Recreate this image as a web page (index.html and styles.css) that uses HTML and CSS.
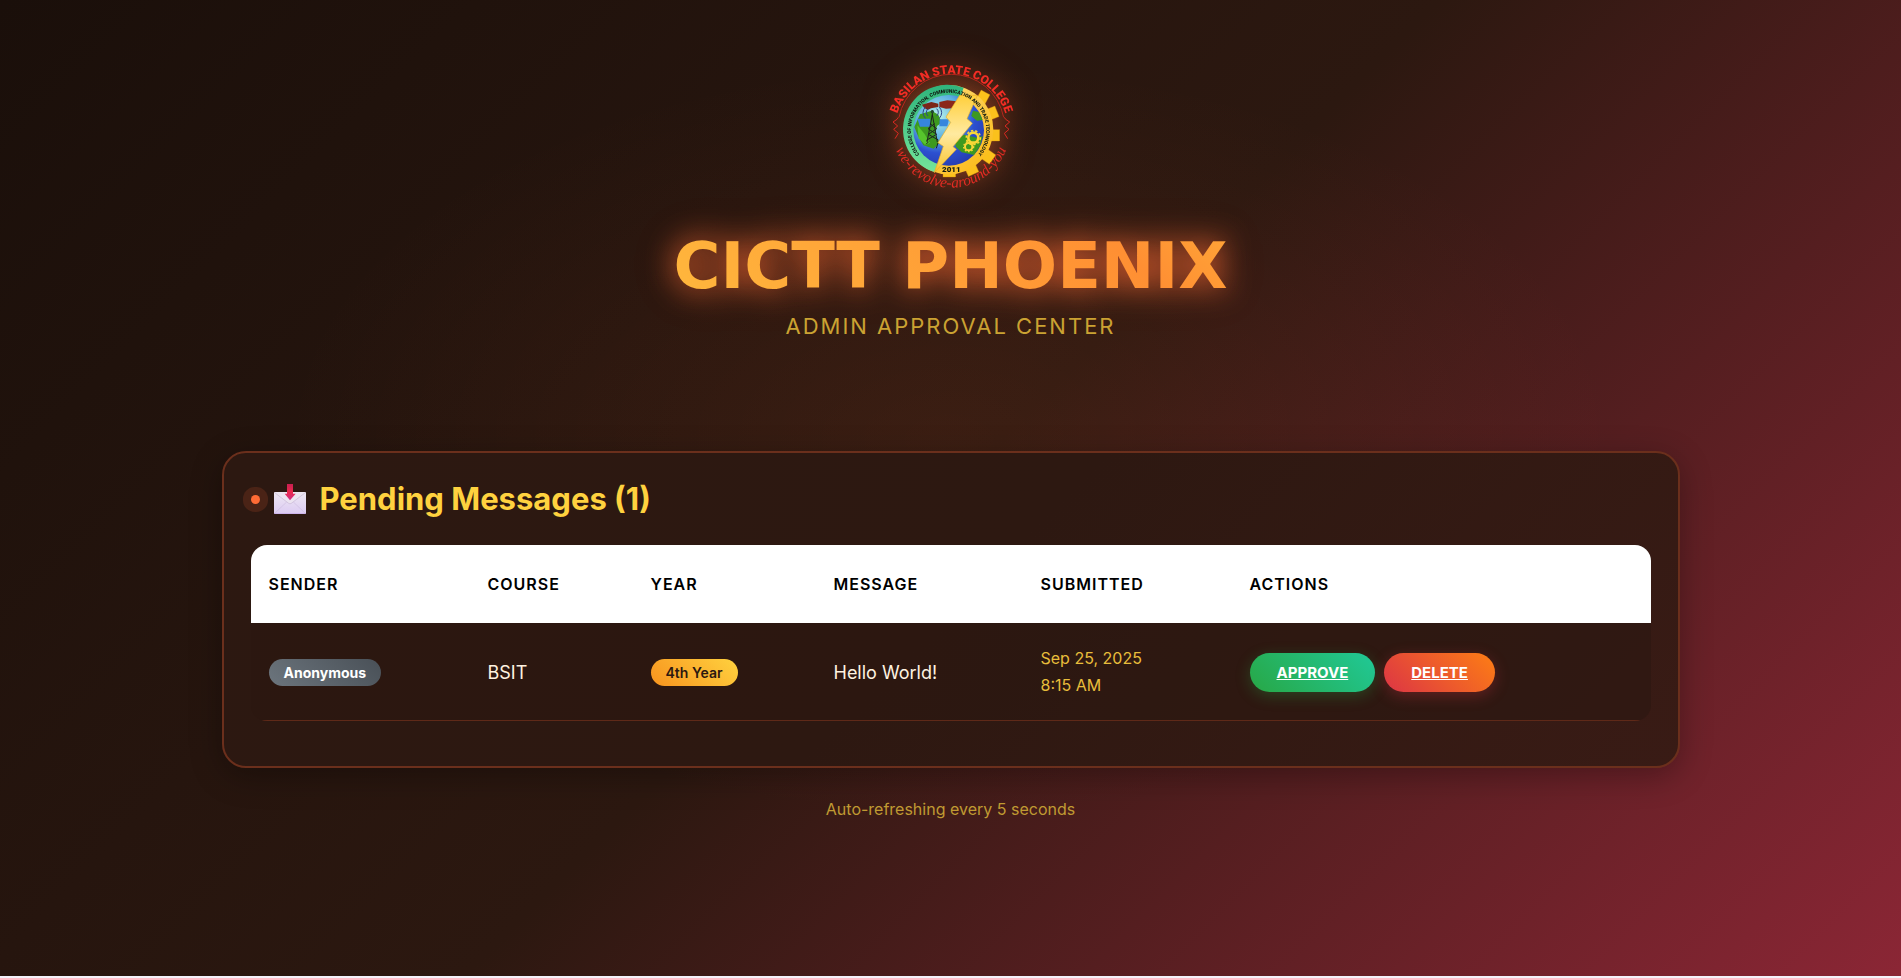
FILE: index.html
```html
<!DOCTYPE html>
<html lang="en">
<head>
<meta charset="utf-8">
<title>CICTT Phoenix - Admin Approval Center</title>
<link rel="stylesheet" href="styles.css">
</head>
<body>
<div class="page">
  <header class="header">
    <svg class="logo" viewBox="60 50 360 390" role="img" aria-label="College seal">
      <defs>
        <linearGradient id="ringGreen" x1="0" y1="0" x2="0" y2="1"><stop offset="0" stop-color="#2fb47c"/><stop offset="1" stop-color="#74e59a"/></linearGradient>
        <linearGradient id="ringGold" x1="0" y1="0" x2="1" y2="1"><stop offset="0" stop-color="#ffe08a"/><stop offset="1" stop-color="#fbb80f"/></linearGradient>
        <radialGradient id="globe" cx=".35" cy=".3" r=".8"><stop offset="0" stop-color="#b8f1ea"/><stop offset=".4" stop-color="#5aaee0"/><stop offset=".65" stop-color="#2c50d0"/><stop offset="1" stop-color="#2438a8"/></radialGradient>
        <linearGradient id="bolt" x1="0" y1="0" x2="0" y2="1"><stop offset="0" stop-color="#ffcf3c"/><stop offset=".5" stop-color="#ffeaa0"/><stop offset="1" stop-color="#f9c22b"/></linearGradient>
        <path id="arcTop" d="M72 254A169 169 0 0 1 410 254"/>
        <path id="arcRing" d="M151 333A113 113 0 1 1 315 333"/>
        <path id="arcBottom" d="M63 250A177 177 0 0 0 417 250"/>
      </defs>
      <path d="M82 216l-4 6-12 8 14 12-12 10 14 12-10 16M400 216l4 6 12 8-14 12 12 10-14 12 10 16" fill="none" stroke="#dc2a23" stroke-width="3"/>
      <path d="M84 216A160 160 0 0 1 398 216" fill="none" stroke="#b8261d" stroke-width="3"/>
      <g fill="#fbc11c" stroke="#d58b0a" stroke-width="1">
        <rect x="319" y="138" width="30" height="34" transform="rotate(28 332 159)"/>
        <rect x="345" y="187" width="34" height="34" transform="rotate(-22 363 204)"/>
        <rect x="354" y="253" width="32" height="34"/>
        <rect x="334" y="316" width="34" height="34" transform="rotate(35 351 333)"/>
        <rect x="284" y="354" width="34" height="34" transform="rotate(66 301 371)"/>
        <rect x="216" y="364" width="38" height="31"/>
      </g>
      <circle cx="233" cy="253" r="134" fill="url(#ringGold)"/>
      <path d="M278 127A134 134 0 1 0 190 380Z" fill="url(#ringGreen)"/>
      <circle cx="233" cy="255" r="106" fill="url(#globe)"/>
      <path d="M147 207l35-11 20 12 10 24-14 10-6 27 14 23-18 18-31-10-17-30-10-25zM253 280l27-12 38 9 17-5-8 30-18 27-37-8-18-17zM306 196l18 4 11 24-17 2-17-14z" fill="#3d991f"/>
      <path d="M139 240l20 24 18 28-14 8-20-21z" fill="#57c52c"/>
      <path d="M139 220h38l4 24h-34zM206 222h28l-5 21h-24z" fill="#3685dd"/>
      <path d="M153 178l28-8 21 5v10l-22 4-10 5-11-7z" fill="#7b2518"/>
      <path d="M205 170l24-5 27 3-2 20-29 2-20-5z" fill="#8b281b"/>
      <g fill="none" stroke="#2d458f" stroke-width="3">
        <path d="M171 190q-10 11 0 22M163 185q-14 17 0 34M197 190q10 11 0 22M205 185q14 17 0 34"/>
      </g>
      <path d="M184 195v20m0-7l-16 82m16-82l15 82M177 235l20 15-25 17 30 17M191 235l-20 15 26 17-31 18M165 297l8-8m28 3l-5 17" fill="none" stroke="#1d241e" stroke-width="3"/>
      <circle cx="184" cy="199" r="5" fill="#21472e"/>
      <path d="M266 150l53 0-31 70 16 14-58 70 10 8-66 70 27-79-16-11 38-61-14-16z" fill="url(#bolt)" stroke="#e8ae25" stroke-width="2"/>
      <g fill="none" stroke="#f8d737">
        <circle cx="307" cy="277" r="15" stroke-width="8"/>
        <circle cx="307" cy="277" r="21" stroke-width="5" stroke-dasharray="7 6"/>
        <circle cx="293" cy="304" r="11" stroke-width="6"/>
        <circle cx="293" cy="304" r="15" stroke-width="4" stroke-dasharray="5 5"/>
      </g>
      <text class="seal-top"><textPath href="#arcTop" startOffset="50%" text-anchor="middle">BASILAN STATE COLLEGE</textPath></text>
      <text class="seal-ring"><textPath href="#arcRing" startOffset="50%" text-anchor="middle">COLLEGE OF INFORMATION, COMMUNICATION AND TRADE TECHNOLOGY</textPath></text>
      <text class="seal-year" x="241" y="381" text-anchor="middle">2011</text>
      <text class="seal-motto"><textPath href="#arcBottom" startOffset="50%" text-anchor="middle">we-revolve-around-you</textPath></text>
    </svg>
    <h1 class="title">CICTT PHOENIX</h1>
    <p class="subtitle">ADMIN APPROVAL CENTER</p>
  </header>

  <main class="card">
    <h2 class="card-title">
      <span class="pulse"></span>
      <svg class="inbox" viewBox="0 0 96 90" aria-hidden="true">
        <defs>
          <linearGradient id="paper" x1="0" y1="0" x2="0" y2="1"><stop offset="0" stop-color="#eee7f2"/><stop offset="1" stop-color="#dccbf3"/></linearGradient>
          <linearGradient id="arrow" x1="0" y1="0" x2="0" y2="1"><stop offset="0" stop-color="#c81e50"/><stop offset=".5" stop-color="#ea2a4e"/><stop offset="1" stop-color="#cf2f88"/></linearGradient>
        </defs>
        <rect y="24" width="96" height="66" rx="3" fill="url(#paper)"/>
        <path d="M2 88l36-34M94 88L58 54" stroke="#cdbcdf" stroke-width="2"/>
        <path d="M2 26l42 32q4 3 8 0l42-32" fill="#ece4f1" stroke="#c7b7d4" stroke-width="2"/>
        <path d="M1 89h94" stroke="#c2a1e5" stroke-width="2"/>
        <path d="M39 0h18v29h8L48 49 32 29h7z" fill="url(#arrow)"/>
      </svg>
      <span>Pending Messages (1)</span>
    </h2>
    <table class="messages">
      <thead>
        <tr>
          <th class="col-sender" scope="col">SENDER</th>
          <th class="col-course" scope="col">COURSE</th>
          <th class="col-year" scope="col">YEAR</th>
          <th class="col-message" scope="col">MESSAGE</th>
          <th class="col-submitted" scope="col">SUBMITTED</th>
          <th scope="col">ACTIONS</th>
        </tr>
      </thead>
      <tbody>
        <tr>
          <td><span class="badge badge-sender">Anonymous</span></td>
          <td>BSIT</td>
          <td><span class="badge badge-year">4th Year</span></td>
          <td>Hello World!</td>
          <td class="submitted">Sep 25, 2025<br>8:15 AM</td>
          <td>
            <div class="actions">
              <a class="button approve" href="#approve">APPROVE</a>
              <a class="button delete" href="#delete">DELETE</a>
            </div>
          </td>
        </tr>
      </tbody>
    </table>
  </main>
  <p class="refresh">Auto-refreshing every 5 seconds</p>
</div>
</body>
</html>
```
FILE: styles.css
```css
* {
  box-sizing: border-box;
}

body {
  margin: 0;
  font-family: Inter, "Liberation Sans", sans-serif;
  color: #fff3e0;
}

.page {
  min-height: 100vh;
  padding: 62px 24px 24px;
  border-bottom: 2px solid #f4f2fa;
  background:
    radial-gradient(ellipse at 50% 45%, rgba(255, 107, 53, 0.08), transparent 50%),
    linear-gradient(135deg, #1a0f0a 0%, #2c1810 50%, #8b2635 100%);
  background-origin: border-box;
}

.header {
  display: flex;
  flex-direction: column;
  align-items: center;
  margin-bottom: 105px;
}

.logo {
  width: 120px;
  height: 130px;
  overflow: visible;
  filter: drop-shadow(0 0 15px rgba(255, 107, 53, 0.5));
}

.seal-top {
  font: 900 36px Roboto, sans-serif;
  fill: #f32d25;
}

.seal-ring {
  font: 900 15px Roboto, sans-serif;
  fill: #101a12;
}

.seal-year {
  font: 900 24px Roboto, sans-serif;
  fill: #101a12;
}

.seal-motto {
  font: italic 46px "Liberation Serif", serif;
  fill: #e22c24;
}

.title {
  margin: 34px 0 0;
  font: bold 64px/80px "DejaVu Sans", sans-serif;
  color: transparent;
  background: linear-gradient(45deg, #ffb83d 0%, #ff8f33 80%, #ffa537 100%);
  background-clip: text;
  -webkit-background-clip: text;
  filter: drop-shadow(0 0 15px rgba(255, 107, 53, 0.8)) drop-shadow(0 0 15px rgba(255, 107, 53, 0.25));
}

.subtitle {
  margin: 0;
  font-size: 22px;
  font-weight: 400;
  line-height: 40px;
  letter-spacing: 2px;
  color: #cba333;
}

.card {
  max-width: 1458px;
  margin: 0 auto;
  padding: 21px 27px 45px;
  border: 2px solid #6b2f1c;
  border-radius: 24px;
  background: linear-gradient(135deg, #2c1811 0%, #2d1811 50%, #391b15 100%);
  box-shadow: 0 8px 32px rgba(0, 0, 0, 0.3);
}

.card-title {
  position: relative;
  display: flex;
  align-items: center;
  gap: 14px;
  margin: 0 0 21px;
  padding-left: 23px;
  font-size: 31px;
  font-weight: 700;
  line-height: 50px;
  color: #ffd23f;
}

.pulse {
  position: absolute;
  left: 0;
  width: 9px;
  height: 9px;
  border-radius: 50%;
  background: #ff6b35;
  box-shadow: 0 0 0 8px #4a2316;
}

.inbox {
  width: 32px;
  height: 30px;
}

.messages {
  width: 100%;
  table-layout: fixed;
  border-collapse: separate;
  border-spacing: 0;
  border-radius: 16px;
  overflow: hidden;
  background: rgba(44, 24, 16, 0.6);
}

.col-sender { width: 219px; }
.col-course { width: 163px; }
.col-year { width: 183px; }
.col-message { width: 207px; }
.col-submitted { width: 209px; }

.messages th {
  padding: 26px 18px;
  background: #fff;
  color: #000;
  font-size: 16px;
  font-weight: 600;
  line-height: 26px;
  letter-spacing: 1px;
  text-align: left;
}

.messages td {
  padding: 22px 18px 21px;
  border-bottom: 1px solid #5f2918;
  font-size: 18px;
  line-height: 27px;
  vertical-align: middle;
}

.messages .submitted {
  font-size: 16px;
  color: #e8bd3b;
}

.badge {
  display: inline-block;
  padding: 0 15px;
  border-radius: 14px;
  font-size: 14px;
  line-height: 27px;
}

.badge-sender {
  font-weight: 700;
  color: #fff;
  background: linear-gradient(45deg, #6c757d, #495057);
}

.badge-year {
  font-weight: 600;
  color: #2c1810;
  background: linear-gradient(45deg, #f7931e, #ffd23f);
}

.actions {
  display: flex;
  gap: 9px;
}

.button {
  padding: 0 27px;
  border-radius: 20px;
  font-size: 15px;
  font-weight: 700;
  line-height: 39px;
  color: #fff;
  text-decoration: underline;
}

.approve {
  background: linear-gradient(45deg, #28a745, #20c997);
  box-shadow: 0 4px 15px rgba(40, 167, 69, 0.3);
}

.delete {
  background: linear-gradient(45deg, #dc3545, #fd7e14);
  box-shadow: 0 4px 15px rgba(220, 53, 69, 0.3);
}

.refresh {
  margin: 28px 0 0;
  font-size: 16px;
  line-height: 26px;
  text-align: center;
  color: #c09a32;
}
```
